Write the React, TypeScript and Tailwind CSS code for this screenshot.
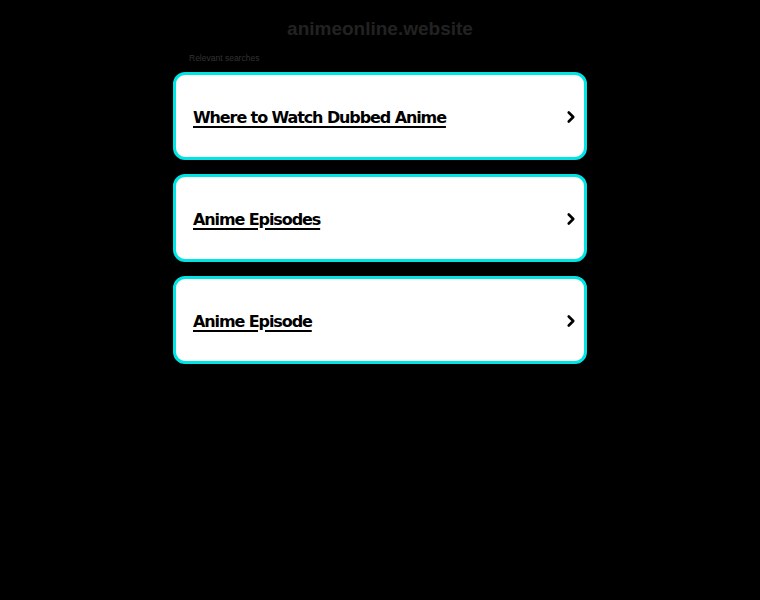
import { ChevronRight } from 'lucide-react';

const searches = ['Where to Watch Dubbed Anime', 'Anime Episodes', 'Anime Episode'];

export default function App() {
  return (
    <div className="min-h-[600px] bg-black font-['DejaVu_Sans',sans-serif]">
      <div className="mx-auto w-[414px] pt-[17px]">
        <h1 className="text-center text-[19px] font-bold leading-[24px] text-[#222] font-['Liberation_Sans',sans-serif]">
          animeonline.website
        </h1>
        <p className="mt-[11px] pl-4 text-[8.5px] leading-[12px] text-[#333] font-['Liberation_Sans',sans-serif]">
          Relevant searches
        </p>
        <div className="mt-[8px] flex flex-col gap-[14px]">
          {searches.map((s) => (
            <a
              key={s}
              href="#"
              className="flex h-[88px] items-center justify-between rounded-[12px] border-[3px] border-[#00e4e4] bg-white pl-[17px] pr-[4px] pt-[3px]"
            >
              <span className="text-[16px] font-bold tracking-[-1.1px] text-black underline decoration-2 underline-offset-[3px]">{s}</span>
              <ChevronRight size={18} strokeWidth={3.5} className="-mt-[1px] text-black" />
            </a>
          ))}
        </div>
      </div>
    </div>
  );
}
